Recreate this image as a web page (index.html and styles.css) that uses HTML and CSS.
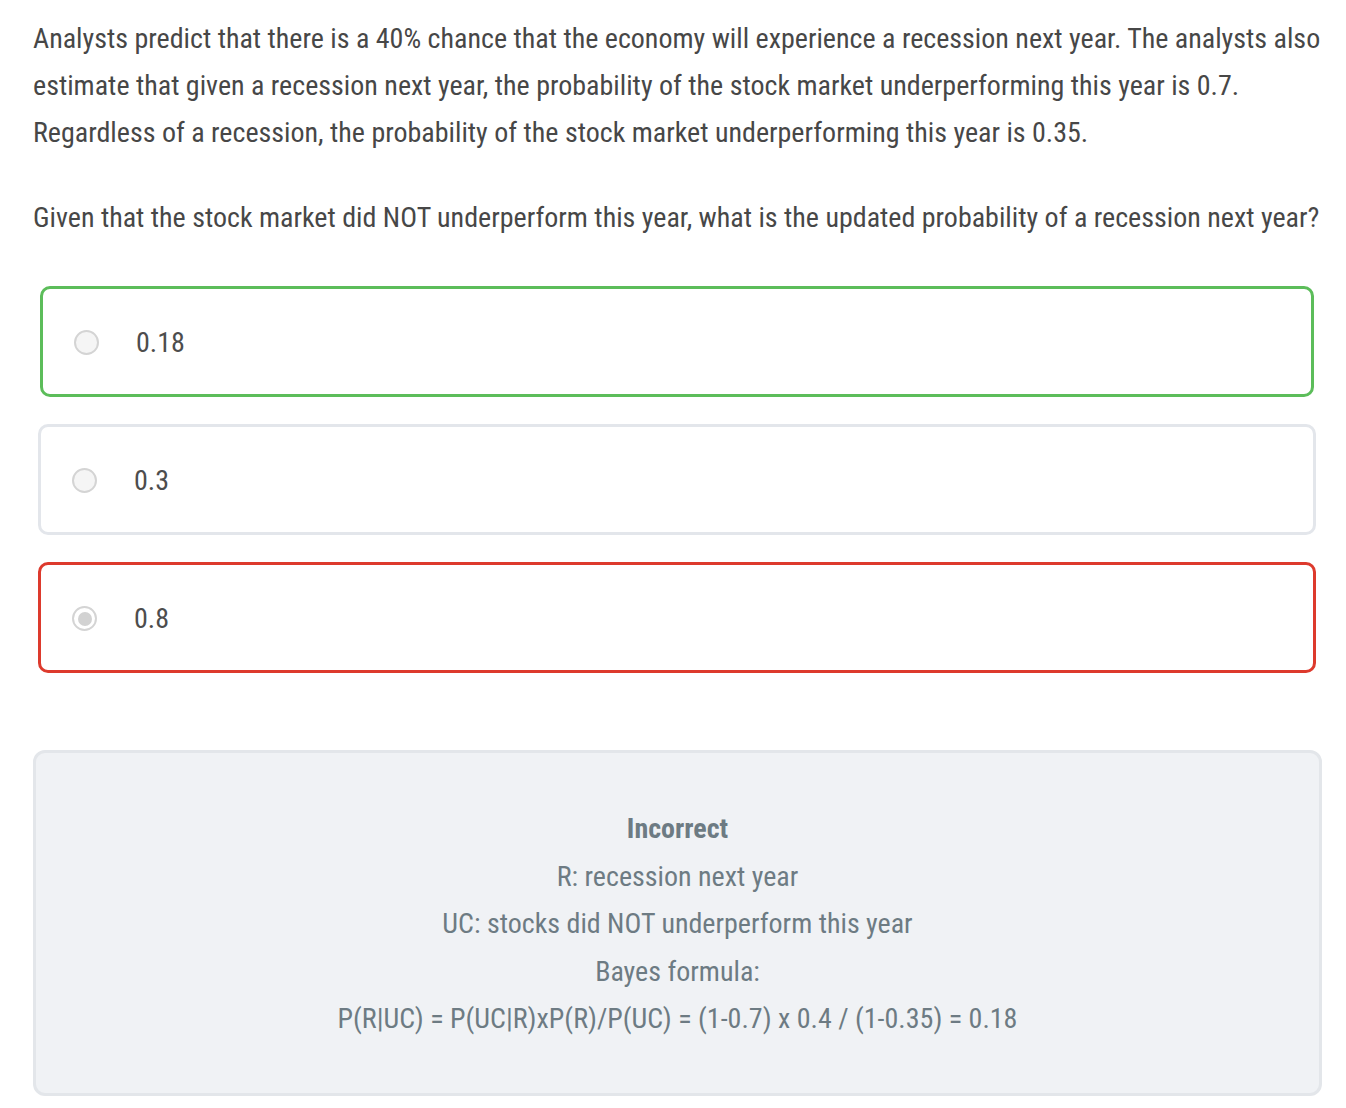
FILE: index.html
```html
<!DOCTYPE html>
<html lang="en">
<head>
<meta charset="utf-8">
<title>Quiz question</title>
<link rel="stylesheet" href="styles.css">
</head>
<body>
<main class="page">
  <p class="intro">Analysts predict that there is a 40% chance that the economy will experience a recession next year. The analysts also estimate that given a recession next year, the probability of the stock market underperforming this year is 0.7. Regardless of a recession, the probability of the stock market underperforming this year is 0.35.</p>
  <p class="question">Given that the stock market did NOT underperform this year, what is the updated probability of a recession next year?</p>
  <div class="options">
    <label class="option option-correct"><span class="radio"></span><span class="option-text">0.18</span></label>
    <label class="option"><span class="radio"></span><span class="option-text">0.3</span></label>
    <label class="option option-wrong"><span class="radio radio-checked"></span><span class="option-text">0.8</span></label>
  </div>
  <section class="feedback">
    <div class="feedback-title">Incorrect</div>
    <div>R: recession next year</div>
    <div>UC: stocks did NOT underperform this year</div>
    <div>Bayes formula:</div>
    <div>P(R|UC) = P(UC|R)xP(R)/P(UC) = (1-0.7) x 0.4 / (1-0.35) = 0.18</div>
  </section>
</main>
</body>
</html>
```

FILE: styles.css
```css
html, body {
  margin: 0;
  padding: 0;
  background: #ffffff;
}

body {
  font-family: "Roboto Condensed", Roboto, "Liberation Sans", sans-serif;
  font-stretch: condensed;
  color: #474747;
  font-size: 28px;
  line-height: 47px;
}

.page {
  padding: 15px 24px 10px 33px;
}

.intro {
  margin: 0 0 38px;
}

.question {
  margin: 0;
  white-space: nowrap;
}

.options {
  margin-top: 45px;
  display: flex;
  flex-direction: column;
  gap: 27px;
  padding: 0 6px 0 5px;
}

.option {
  display: flex;
  align-items: center;
  height: 111px;
  box-sizing: border-box;
  border: 3px solid #e3e6eb;
  border-radius: 10px;
  padding: 2px 0 0 31px;
  background: #fff;
}

.option-correct {
  border-color: #5cbd5a;
  margin: 0 2px;
}

.option-wrong {
  border-color: #dd3a2d;
}

.radio {
  width: 25px;
  height: 25px;
  box-sizing: border-box;
  border-radius: 50%;
  border: 2px solid #d4d4d4;
  background: #f5f5f5;
  flex: none;
  display: flex;
  align-items: center;
  justify-content: center;
}

.radio-checked {
  background: #fff;
}

.radio-checked::after {
  content: "";
  width: 14px;
  height: 14px;
  border-radius: 50%;
  background: #d2d2d2;
}

.option-text {
  margin-left: 37px;
  color: #4d4d4d;
}

.feedback {
  margin-top: 77px;
  border: 3px solid #e3e6ea;
  border-radius: 12px;
  background: #f0f2f5;
  padding: 52px 20px 50px;
  text-align: center;
  color: #6d7b83;
  line-height: 47.5px;
}

.feedback-title {
  font-weight: 700;
}
```
